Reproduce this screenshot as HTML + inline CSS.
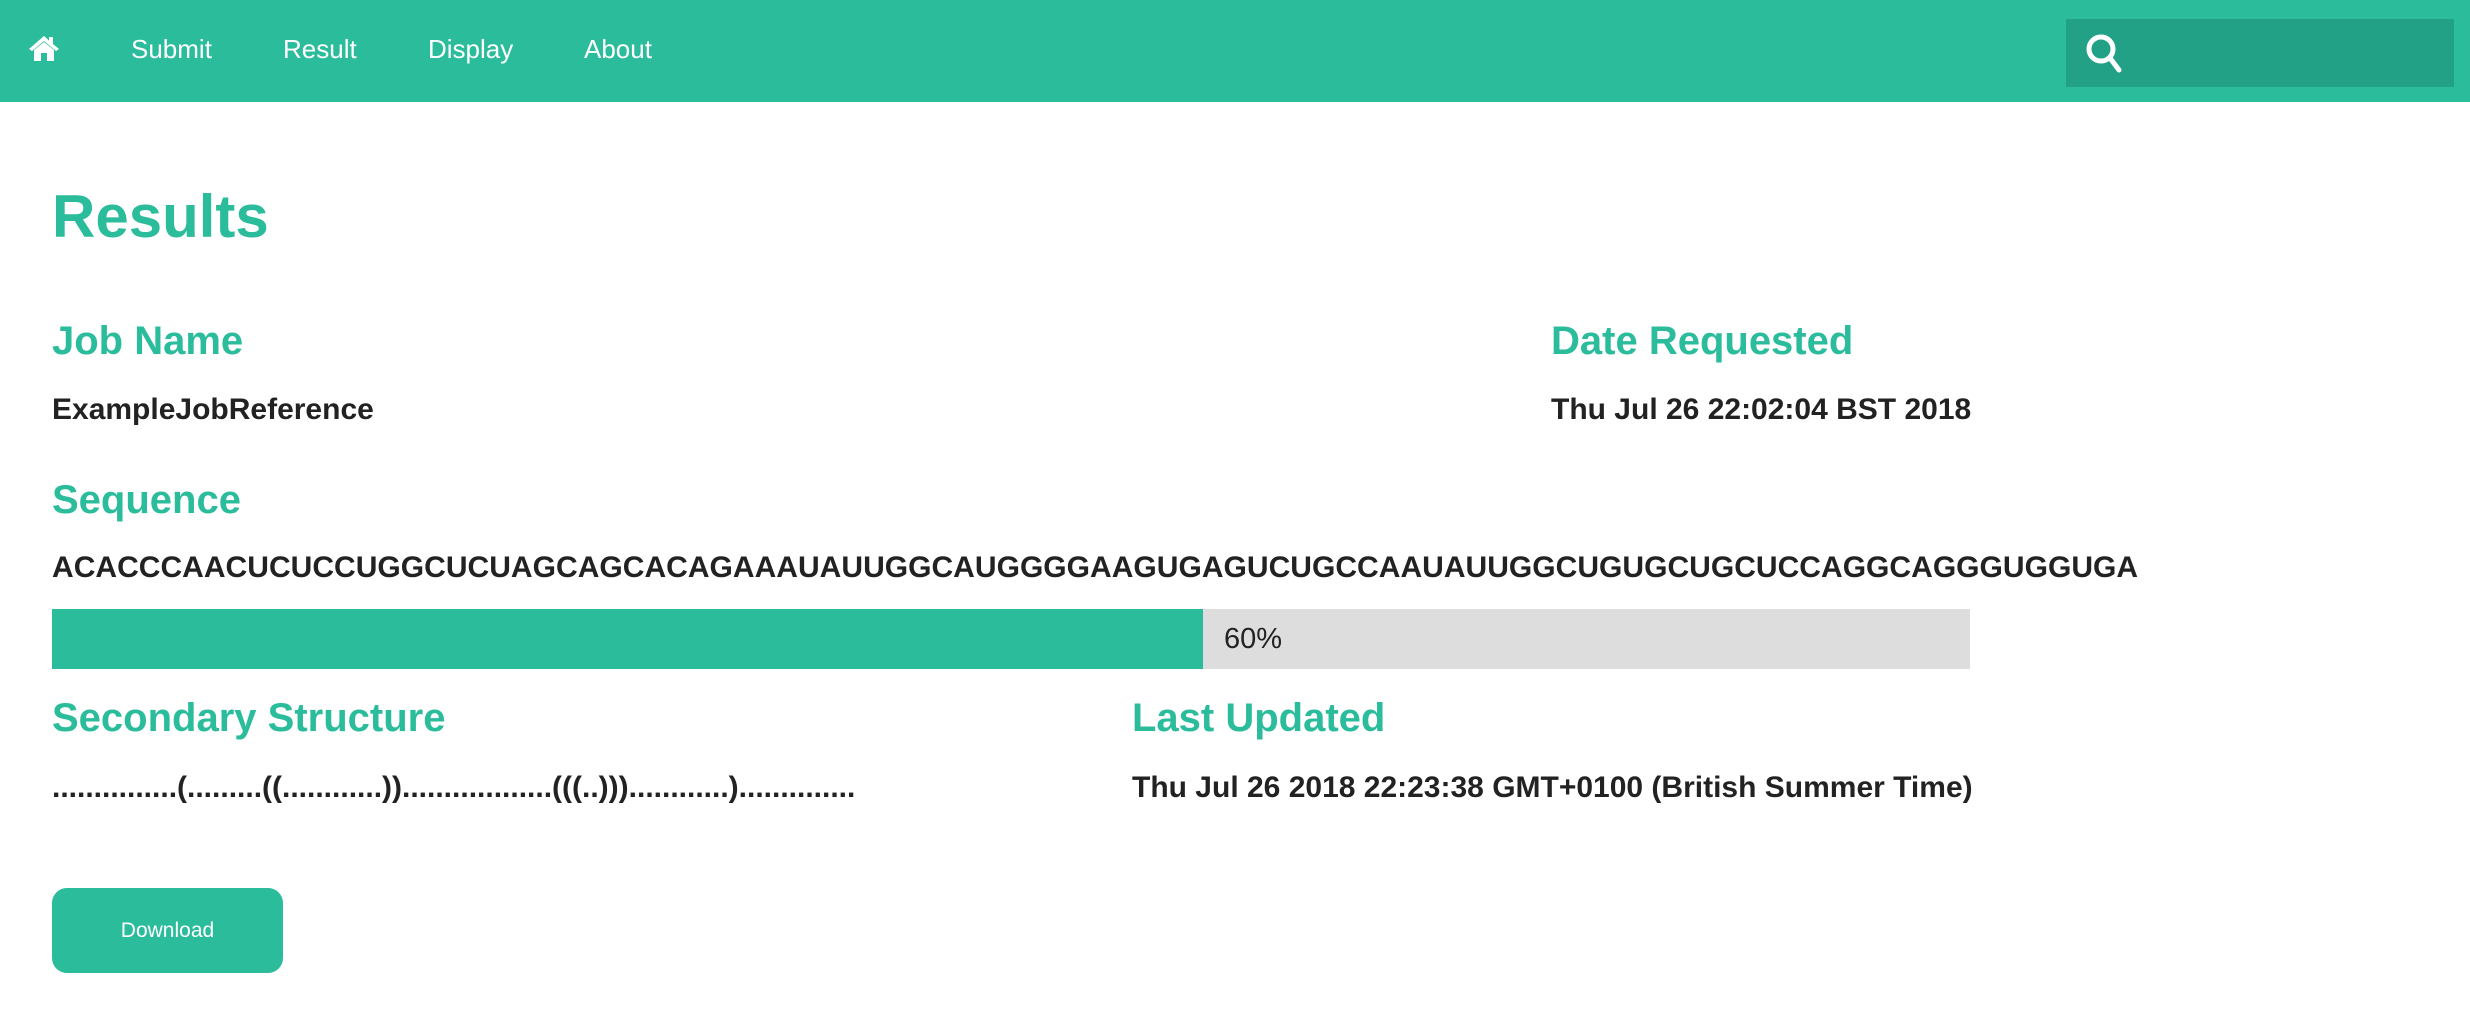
<!DOCTYPE html>
<html><head><meta charset="utf-8"><style>
*{margin:0;padding:0;box-sizing:border-box}
body{width:2470px;height:1028px;background:#fff;font-family:"Liberation Sans",Arial,sans-serif;position:relative;overflow:hidden}
.nav{position:absolute;left:0;top:0;width:2470px;height:102px;background:#2bbc9b}
.nav a{position:absolute;top:34px;color:#fff;font-size:26px;line-height:30px;text-decoration:none}
.search{position:absolute;left:2066px;top:19px;width:388px;height:68px;background:#23a186}
.a{position:absolute;white-space:nowrap;line-height:1}
.h{color:#2bbc9b;font-weight:bold;font-size:40px}
.t{color:#222;font-weight:bold;font-size:30px}
</style></head><body>
<div class="nav">
<svg style="position:absolute;left:28px;top:34px" width="32" height="28" viewBox="0 0 32 28"><path d="M16 2 L1 15 L4 17 L16 7 L28 17 L31 15 L25 10 L25 3 L21 3 L21 6.5Z" fill="#fff"/><path d="M6 16 L16 8 L26 16 L26 27 L19 27 L19 19 L13 19 L13 27 L6 27Z" fill="#fff"/></svg>
<a style="left:131px">Submit</a>
<a style="left:283px">Result</a>
<a style="left:428px">Display</a>
<a style="left:584px">About</a>
<div class="search"><svg style="position:absolute;left:18px;top:13px" width="44" height="44" viewBox="0 0 44 44"><circle cx="17" cy="17" r="12" fill="none" stroke="#fff" stroke-width="5"/><line x1="26" y1="26" x2="35" y2="38" stroke="#fff" stroke-width="5" stroke-linecap="round"/></svg></div>
</div>
<div class="a" style="left:52px;top:187px;color:#2bbc9b;font-weight:bold;font-size:60px">Results</div>
<div class="a h" style="left:52px;top:321px">Job Name</div>
<div class="a h" style="left:1551px;top:321px">Date Requested</div>
<div class="a t" style="left:52px;top:395px">ExampleJobReference</div>
<div class="a t" style="left:1551px;top:395px">Thu Jul 26 22:02:04 BST 2018</div>
<div class="a h" style="left:52px;top:480px">Sequence</div>
<div class="a t" style="left:52px;top:553px;letter-spacing:0.03px">ACACCCAACUCUCCUGGCUCUAGCAGCACAGAAAUAUUGGCAUGGGGAAGUGAGUCUGCCAAUAUUGGCUGUGCUGCUCCAGGCAGGGUGGUGA</div>
<div style="position:absolute;left:52px;top:609px;width:1918px;height:60px;background:#dddddd">
<div style="width:1151px;height:60px;background:#2bbc9b"></div>
<div class="a" style="left:1172px;top:16px;font-size:29px;color:#222">60%</div></div>
<div class="a h" style="left:52px;top:698px">Secondary Structure</div>
<div class="a h" style="left:1132px;top:698px">Last Updated</div>
<div class="a t" style="left:52px;top:773px">...............(.........((............))..................(((..)))............)..............</div>
<div class="a t" style="left:1132px;top:773px">Thu Jul 26 2018 22:23:38 GMT+0100 (British Summer Time)</div>
<div style="position:absolute;left:52px;top:888px;width:231px;height:85px;background:#2bbc9b;border-radius:15px;color:#fff;font-size:21px;text-align:center;line-height:85px">Download</div>
</body></html>
